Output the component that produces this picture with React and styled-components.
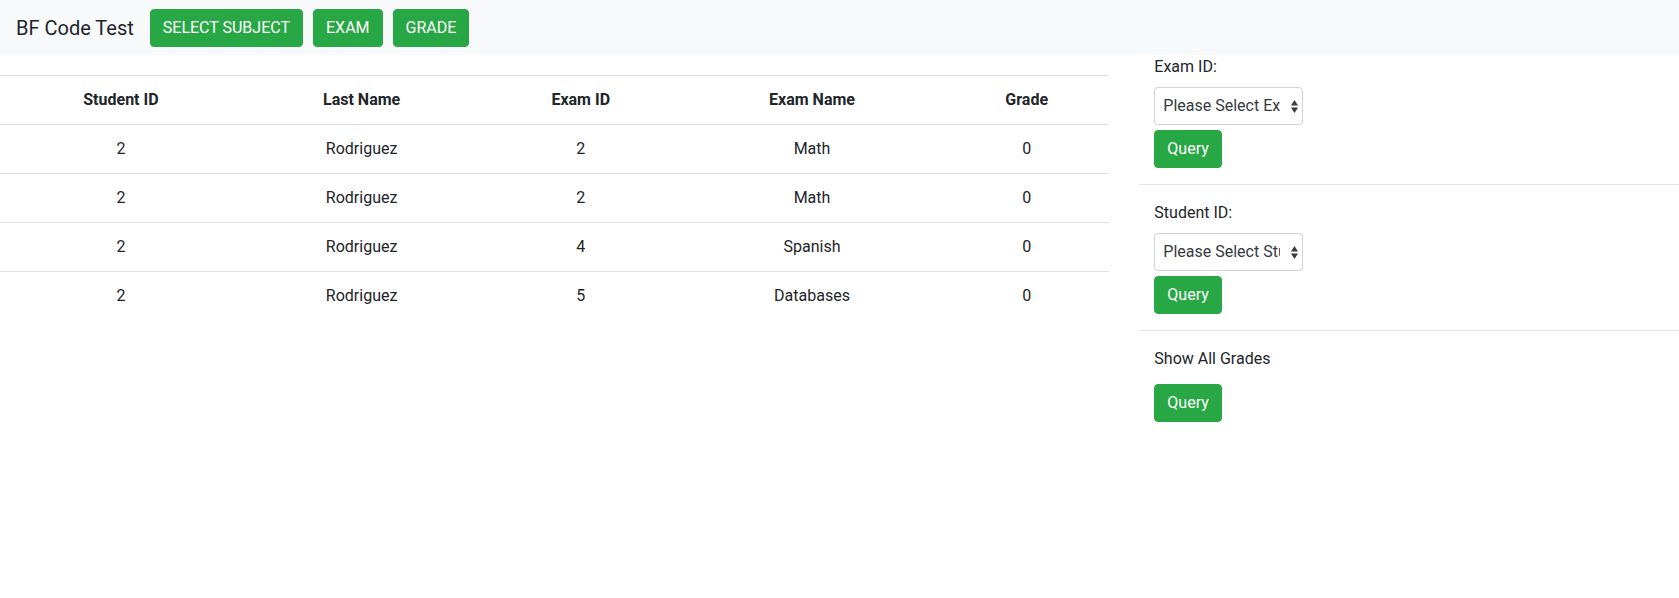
import React from 'react';
import styled, { createGlobalStyle } from 'styled-components';

const GlobalStyle = createGlobalStyle`
  *, *::before, *::after { box-sizing: border-box; }
  html, body { margin: 0; padding: 0; }
  body {
    font-family: Roboto, "Liberation Sans", Arial, sans-serif;
    font-size: 16px;
    line-height: 1.5;
    color: #212529;
    background: #fff;
    overflow-x: hidden;
  }
`;

const Navbar = styled.nav`
  display: flex;
  align-items: center;
  height: 55px;
  padding: 0 16px;
  background: #f8f9fa;
`;

const Brand = styled.span`
  font-size: 20px;
  line-height: 30px;
  margin-right: 16px;
  white-space: nowrap;
`;

const NavButtons = styled.div`
  display: flex;
  gap: 10px;
`;

const Button = styled.button`
  align-self: flex-start;
  margin-top: ${(p) => (p.$stacked ? '5px' : '0')};
  font-family: inherit;
  font-size: 16px;
  line-height: 24px;
  height: 38px;
  padding: 6px 12px;
  color: #fff;
  background: #28a745;
  border: 1px solid #28a745;
  border-radius: 4px;
  white-space: nowrap;
  cursor: pointer;
`;

const Main = styled.div`
  display: flex;
  align-items: flex-start;
  gap: 30px;
`;

const TableCol = styled.div`
  flex: 0 0 calc(66.6667% - 10px);
  padding-top: 20px;
`;

const Table = styled.table`
  width: 100%;
  border-collapse: collapse;
`;

const Th = styled.th`
  width: ${(p) => p.$w};
  padding: 12px;
  border-top: 1px solid #dee2e6;
  text-align: center;
  font-weight: 700;
  line-height: 24px;
`;

const Td = styled.td`
  padding: 12px;
  border-top: 1px solid #dee2e6;
  text-align: center;
  line-height: 24px;
`;

const Side = styled.aside`
  flex: 1;
  min-width: 0;
`;

const Section = styled.section`
  display: flex;
  flex-direction: column;
  padding: 0 15px;
`;

const Label = styled.label`
  margin-bottom: 8px;
  line-height: 24px;
`;

const Divider = styled.hr`
  margin: 16px 0;
  border: 0;
  border-top: 1px solid rgba(0, 0, 0, 0.1);
`;

const SelectWrap = styled.div`
  position: relative;
  width: 149px;
  height: 38px;
`;

const Select = styled.select`
  width: 100%;
  height: 38px;
  padding: 6px 22px 6px 8px;
  font-family: inherit;
  font-size: 16px;
  line-height: 24px;
  color: #343a40;
  background: #fff;
  border: 1px solid #ced4da;
  border-radius: 4px;
  appearance: none;
  -webkit-appearance: none;
  overflow: hidden;
`;

const Arrows = styled.svg`
  position: absolute;
  right: 5px;
  top: 13px;
  pointer-events: none;
`;

const columns = [
  { label: 'Student ID', w: '21.8%' },
  { label: 'Last Name', w: '21.6%' },
  { label: 'Exam ID', w: '17.9%' },
  { label: 'Exam Name', w: '23.8%' },
  { label: 'Grade', w: '14.9%' },
];

const rows = [
  ['2', 'Rodriguez', '2', 'Math', '0'],
  ['2', 'Rodriguez', '2', 'Math', '0'],
  ['2', 'Rodriguez', '4', 'Spanish', '0'],
  ['2', 'Rodriguez', '5', 'Databases', '0'],
];

function SelectBox({ placeholder }) {
  return (
    <SelectWrap>
      <Select defaultValue="">
        <option value="">{placeholder}</option>
      </Select>
      <Arrows width="7" height="13" viewBox="0 0 7 13">
        <polygon points="0,5.5 3.5,0 7,5.5" fill="#3a3a3a" />
        <polygon points="0,7.5 3.5,13 7,7.5" fill="#3a3a3a" />
      </Arrows>
    </SelectWrap>
  );
}

export default function App() {
  return (
    <>
      <GlobalStyle />
      <Navbar>
        <Brand>BF Code Test</Brand>
        <NavButtons>
          <Button>SELECT SUBJECT</Button>
          <Button>EXAM</Button>
          <Button>GRADE</Button>
        </NavButtons>
      </Navbar>
      <Main>
        <TableCol>
          <Table>
            <thead>
              <tr>
                {columns.map((c) => (
                  <Th key={c.label} $w={c.w}>{c.label}</Th>
                ))}
              </tr>
            </thead>
            <tbody>
              {rows.map((r, i) => (
                <tr key={i}>
                  {r.map((v, j) => (
                    <Td key={j}>{v}</Td>
                  ))}
                </tr>
              ))}
            </tbody>
          </Table>
        </TableCol>
        <Side>
          <Section>
            <Label>Exam ID:</Label>
            <SelectBox placeholder="Please Select Exam ID" />
            <Button $stacked>Query</Button>
          </Section>
          <Divider />
          <Section>
            <Label>Student ID:</Label>
            <SelectBox placeholder="Please Select Student ID" />
            <Button $stacked>Query</Button>
          </Section>
          <Divider />
          <Section>
            <Label>Show All Grades</Label>
            <Button $stacked>Query</Button>
          </Section>
        </Side>
      </Main>
    </>
  );
}
